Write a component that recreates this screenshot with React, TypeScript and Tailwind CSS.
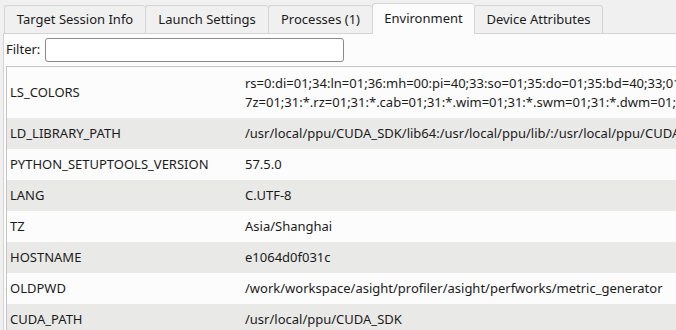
const tabs = [
  { label: "Target Session Info", w: "w-[141px]" },
  { label: "Launch Settings", w: "w-[123px]" },
  { label: "Processes (1)", w: "w-[104px]" },
  { label: "Environment", w: "w-[102px]", active: true },
  { label: "Device Attributes", w: "w-[129px]", last: true },
];

const rows: { key: string; value: string[] }[] = [
  {
    key: "LS_COLORS",
    value: [
      "rs=0:di=01;34:ln=01;36:mh=00:pi=40;33:so=01;35:do=01;35:bd=40;33;01:cd=40;33;01:or=40;31;01:mi=00:su=37;41",
      "7z=01;31:*.rz=01;31:*.cab=01;31:*.wim=01;31:*.swm=01;31:*.dwm=01;31:*.esd=01;31:*.jpg=01;35:*.jpeg=01;35",
    ],
  },
  {
    key: "LD_LIBRARY_PATH",
    value: ["/usr/local/ppu/CUDA_SDK/lib64:/usr/local/ppu/lib/:/usr/local/ppu/CUDA_SDK/extras/CUPTI/lib64"],
  },
  { key: "PYTHON_SETUPTOOLS_VERSION", value: ["57.5.0"] },
  { key: "LANG", value: ["C.UTF-8"] },
  { key: "TZ", value: ["Asia/Shanghai"] },
  { key: "HOSTNAME", value: ["e1064d0f031c"] },
  { key: "OLDPWD", value: ["/work/workspace/asight/profiler/asight/perfworks/metric_generator"] },
  { key: "CUDA_PATH", value: ["/usr/local/ppu/CUDA_SDK"] },
];

export default function App() {
  return (
    <div
      className="w-[676px] h-[330px] overflow-hidden bg-[#f0f0f0] pl-[3px] text-[13px] text-[#1b1b1b]"
      style={{ fontFamily: '"Noto Sans", "Open Sans", sans-serif' }}
    >
      {/* Tab bar */}
      <div className="flex items-end h-[34px] pl-[1px] border-b border-[#d4d4d4]">
        {tabs.map((t) =>
          t.active ? (
            <div
              key={t.label}
              className={`${t.w} h-[31px] -mb-px flex items-start justify-center pt-[5px] bg-[#fcfcfc] border-l border-t border-[#d4d4d4] rounded-t-[3px] relative z-10`}
            >
              {t.label}
            </div>
          ) : (
            <div
              key={t.label}
              className={`${t.w} h-[28px] flex items-center justify-center bg-[#f0f0f0] border-l border-t border-[#d4d4d4] rounded-t-[3px] ${t.last ? "border-r" : ""}`}
            >
              {t.label}
            </div>
          )
        )}
      </div>

      {/* Panel */}
      <div className="h-[296px] bg-[#fcfcfc] border-l border-[#d4d4d4] pl-px">
        <div className="flex items-center h-[32px] pb-px">
          <span className="pl-px w-[40px]">Filter:</span>
          <div className="w-[299px] h-[24px] bg-white border border-[#8a8a8a] rounded-[3px]" />
        </div>

        <div className="ml-px border-t border-l border-[#c4c4c4] bg-[#fcfcfc]">
          {rows.map((r, i) => (
            <div
              key={r.key}
              className={`flex items-center ${r.value.length > 1 ? "h-[51px]" : "h-[31px]"} ${
                i % 2 === 1 ? "bg-[#e9e9e8]" : ""
              }`}
            >
              <div className="w-[234px] shrink-0 pl-[3px] whitespace-nowrap">{r.key}</div>
              <div className="pl-[4px] whitespace-nowrap leading-[19px]">
                {r.value.map((v) => (
                  <div key={v}>{v}</div>
                ))}
              </div>
            </div>
          ))}
        </div>
      </div>
    </div>
  );
}
